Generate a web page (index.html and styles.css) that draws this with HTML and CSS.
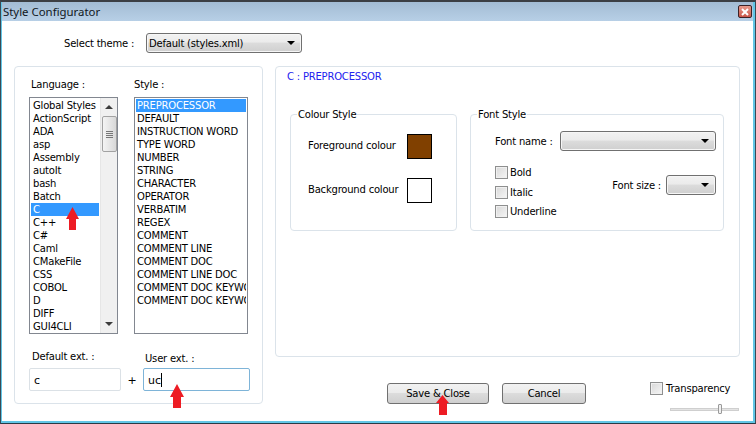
FILE: index.html
```html
<!DOCTYPE html>
<html lang="en">
<head>
<meta charset="utf-8">
<title>Style Configurator</title>
<link rel="stylesheet" href="styles.css">
</head>
<body>
<div class="window">
  <header class="titlebar">
    <span class="title">Style Configurator</span>
    <span class="close"><svg width="10" height="8" viewBox="0 0 10 8"><path d="M2 1 L8 7 M8 1 L2 7" stroke="#fff" stroke-width="2" fill="none"/></svg></span>
  </header>
  <div class="client">
    <div class="theme-row">
      <span class="theme-label">Select theme :</span>
      <div class="combo theme-combo"><span>Default (styles.xml)</span><i class="caret"></i></div>
    </div>
    <div class="main">
      <section class="left panel">
        <div class="lists">
          <div class="list-col lang-col">
            <div class="cap">Language :</div>
            <div class="listbox lang-box">
              <ul class="items">
                <li>Global Styles</li><li>ActionScript</li><li>ADA</li><li>asp</li><li>Assembly</li><li>autoIt</li><li>bash</li><li>Batch</li><li class="sel">C</li><li>C++</li><li>C#</li><li>Caml</li><li>CMakeFile</li><li>CSS</li><li>COBOL</li><li>D</li><li>DIFF</li><li>GUI4CLI</li>
              </ul>
              <div class="scrollbar">
                <i class="sb-up"></i>
                <div class="sb-thumb"><b></b><b></b><b></b><b></b></div>
                <i class="sb-down"></i>
              </div>
            </div>
          </div>
          <div class="list-col style-col">
            <div class="cap">Style :</div>
            <div class="listbox style-box">
              <ul class="items">
                <li class="sel">PREPROCESSOR</li><li>DEFAULT</li><li>INSTRUCTION WORD</li><li>TYPE WORD</li><li>NUMBER</li><li>STRING</li><li>CHARACTER</li><li>OPERATOR</li><li>VERBATIM</li><li>REGEX</li><li>COMMENT</li><li>COMMENT LINE</li><li>COMMENT DOC</li><li>COMMENT LINE DOC</li><li>COMMENT DOC KEYWORD</li><li>COMMENT DOC KEYWORD ERROR</li>
              </ul>
            </div>
          </div>
        </div>
        <div class="exts">
          <div class="ext ext-default">
            <div class="ext-cap">Default ext. :</div>
            <div class="field">c</div>
          </div>
          <span class="plus">+</span>
          <div class="ext ext-user">
            <div class="ext-cap">User ext. :</div>
            <div class="field focus">uc<i class="cursor"></i></div>
          </div>
        </div>
      </section>
      <div class="right">
        <section class="panel detail">
          <div class="detail-title">C : PREPROCESSOR</div>
          <div class="groups">
            <fieldset class="group colour-group">
              <legend>Colour Style</legend>
              <div class="colour-row"><span>Foreground colour</span><i class="swatch brown"></i></div>
              <div class="colour-row"><span>Background colour</span><i class="swatch"></i></div>
            </fieldset>
            <fieldset class="group font-group">
              <legend>Font Style</legend>
              <div class="font-name-row">
                <span>Font name :</span>
                <div class="combo name-combo"><i class="caret"></i></div>
              </div>
              <div class="font-lower">
                <div class="checks">
                  <label class="check"><i class="box"></i>Bold</label>
                  <label class="check"><i class="box"></i>Italic</label>
                  <label class="check"><i class="box"></i>Underline</label>
                </div>
                <div class="font-size">
                  <span>Font size :</span>
                  <div class="combo size-combo"><i class="caret"></i></div>
                </div>
              </div>
            </fieldset>
          </div>
        </section>
        <div class="bottom">
          <button class="btn save">Save &amp; Close</button>
          <button class="btn cancel">Cancel</button>
          <div class="transparency">
            <label class="check trans-check"><i class="box"></i>Transparency</label>
            <div class="slider"><i class="thumb"></i></div>
          </div>
        </div>
      </div>
    </div>
    <svg class="arrow arrow-lang" width="13" height="23" viewBox="0 0 13 23"><path d="M6.5 0 L13 12 H10 V23 H3 V12 H0 Z" fill="#ed1c24"/></svg>
    <svg class="arrow arrow-ext" width="14" height="24" viewBox="0 0 14 24"><path d="M7 0 L14 13 H11 V24 H3 V13 H0 Z" fill="#ed1c24"/></svg>
    <svg class="arrow arrow-save" width="13" height="20" viewBox="0 0 13 20"><path d="M6.5 0 L13 8 H11 V20 H3 V8 H0 Z" fill="#ed1c24"/></svg>
  </div>
</div>
</body>
</html>
```
FILE: styles.css
```css
* { box-sizing: border-box; }
html, body { margin: 0; padding: 0; }
body { width: 756px; height: 424px; overflow: hidden; background: #fff; font-family: "DejaVu Sans", "Noto Sans", sans-serif; font-size: 10px; letter-spacing: -0.2px; color: #000; }
.window { position: relative; width: 756px; height: 424px; display: flex; flex-direction: column; border: 1px solid #3a4a55; border-top: 2px solid #3c3f44; border-bottom: 1px solid #2a3a44; background: #62c6e6; padding: 0 2px 2px 1px; }
.titlebar { height: 19px; flex: none; display: flex; justify-content: space-between; align-items: center; background: linear-gradient(#a3bcd4, #b7cfe6); padding: 0 1px 0 1px; }
.title { font-family: "Noto Sans", sans-serif; font-size: 11.4px; letter-spacing: 0; color: #10161c; }
.close { width: 14px; height: 13px; border: 1px solid #3c2226; border-radius: 2px; background: linear-gradient(#e89a8c, #c9564a); display: flex; align-items: center; justify-content: center; }
.client { position: relative; flex: 1; background: #fff; padding: 12px 11px 0 11px; border-left: 1px solid #fff; }
.theme-row { display: flex; align-items: center; height: 20px; }
.theme-label { margin-left: 50px; width: 82px; }
.combo { height: 20px; border: 1px solid #707070; border-radius: 3px; background: linear-gradient(#f2f2f2 0, #ebebeb 45%, #dcdcdc 50%, #cfcfcf 100%); display: flex; align-items: center; justify-content: space-between; padding: 0 6px 0 2px; box-shadow: inset 0 0 0 1px #f6f6f6; }
.theme-combo { width: 156px; }
.caret { flex: none; margin-left: auto; width: 0; height: 0; border-left: 4px solid transparent; border-right: 4px solid transparent; border-top: 4px solid #000; }
.main { display: flex; gap: 12px; margin-top: 13px; }
.panel { border: 1px solid #dbe3ea; border-radius: 4px; background: #fff; }
.left { width: 249px; height: 338px; padding: 10px 12px 0 14px; }
.lists { display: flex; gap: 16px; }
.cap { height: 20px; padding: 1px 0 0 2px; line-height: 13px; }
.lang-col { width: 89px; }
.style-col { width: 114px; }
.style-col .cap { padding-left: 0; }
.listbox { height: 237px; border: 1px solid #828790; display: flex; overflow: hidden; background: #fff; padding: 1px; }
.items { list-style: none; margin: 0; padding: 0; flex: 1; min-width: 0; }
.items li { height: 13px; line-height: 13px; padding-left: 1px; white-space: nowrap; overflow: hidden; }
.lang-box .items li { padding-left: 2px; }
.items li.sel { background: #3399ff; color: #fff; }
.scrollbar { width: 17px; flex: none; margin: -1px -1px -1px 1px; background: #f0f0f0; border-left: 1px solid #e6e6e6; display: flex; flex-direction: column; align-items: center; }
.sb-up { margin-top: 7px; width: 0; height: 0; border-left: 4px solid transparent; border-right: 4px solid transparent; border-bottom: 4px solid #3c3c3c; }
.sb-down { margin-top: auto; margin-bottom: 7px; width: 0; height: 0; border-left: 4px solid transparent; border-right: 4px solid transparent; border-top: 4px solid #3c3c3c; }
.sb-thumb { width: 15px; height: 36px; margin-top: 7px; border: 1px solid #a2a2a2; border-radius: 2px; background: linear-gradient(90deg, #f4f4f4, #d8d8d8); display: flex; flex-direction: column; align-items: center; justify-content: center; gap: 1px; }
.sb-thumb b { display: block; width: 7px; height: 1px; background: #777; }
.exts { display: flex; align-items: flex-end; margin-top: 16px; }
.ext-cap { height: 13px; line-height: 13px; padding-left: 3px; margin-bottom: 5px; }
.ext-default { width: 92px; }
.ext-user { width: 107px; }
.ext-user .ext-cap { padding-left: 2px; margin-bottom: 3px; }
.field { height: 23px; line-height: 23px; border: 1px solid #dbe1e6; border-radius: 2px; padding-left: 4px; font-size: 11px; letter-spacing: 0; background: #fff; }
.field.focus { border-color: #7eb4d8; }
.cursor { display: inline-block; width: 1px; height: 14px; background: #000; vertical-align: -3px; }
.plus { width: 22px; text-align: center; height: 20px; line-height: 20px; font-size: 11px; }
.right { width: 465px; display: flex; flex-direction: column; }
.detail { height: 291px; padding: 3px 0 0 11px; }
.detail-title { height: 14px; line-height: 14px; color: #2222ee; }
.groups { display: flex; gap: 13px; margin-top: 24px; margin-left: 3px; }
.group { margin: 0; padding: 0; min-width: 0; height: 123px; border: 1px solid #dbe3ea; border-radius: 4px; }
.group legend { padding: 0 1px; line-height: 13px; }
.colour-group { width: 167px; padding: 12px 24px 0 17px; }
.colour-group legend { margin-left: -11px; }
.colour-row { display: flex; align-items: center; justify-content: space-between; height: 26px; margin-bottom: 18px; }
.colour-row span { margin-top: -1px; }
.swatch { width: 25px; height: 25px; border: 1px solid #000; background: #fff; }
.swatch.brown { background: #804000; }
.font-group { width: 254px; padding: 10px 7px 0 24px; }
.font-group legend { margin-left: -18px; }
.font-name-row { display: flex; align-items: center; justify-content: space-between; height: 20px; }
.name-combo { width: 156px; }
.font-lower { display: flex; justify-content: space-between; margin-top: 15px; }
.checks { display: flex; flex-direction: column; gap: 6.5px; }
.check { display: flex; align-items: center; height: 13px; gap: 2px; }
.box { flex: none; width: 13px; height: 13px; border: 1px solid #8e8f8f; background: linear-gradient(135deg, #d8d8d8, #f6f6f6); box-shadow: inset 0 0 0 1px #f0f0f0; }
.font-size { display: flex; align-items: center; gap: 5px; height: 20px; margin-top: 9px; }
.size-combo { width: 50px; }
.bottom { display: flex; align-items: flex-start; margin-top: 26px; padding-left: 112px; }
.btn { height: 21px; border: 1px solid #707070; border-radius: 3px; background: linear-gradient(#f2f2f2 0, #ebebeb 45%, #dcdcdc 50%, #cfcfcf 100%); font: inherit; letter-spacing: inherit; color: #000; padding: 0; }
.save { width: 102px; }
.cancel { width: 84px; margin-left: 13px; }
.transparency { margin-left: 64px; margin-top: -1px; }
.trans-check { gap: 3px; }
.slider { position: relative; width: 69px; height: 3px; margin: 13px 0 0 20px; background: #e4e4e4; border: 1px solid #cfcfcf; }
.thumb { position: absolute; left: 47px; top: -5px; width: 4px; height: 10px; background: #f0f0f0; border: 1px solid #9a9a9a; border-radius: 1px; }
.arrow { position: absolute; }
.arrow-lang { left: 63px; top: 186px; }
.arrow-ext { left: 167px; top: 363px; }
.arrow-save { left: 433px; top: 374px; }
```
